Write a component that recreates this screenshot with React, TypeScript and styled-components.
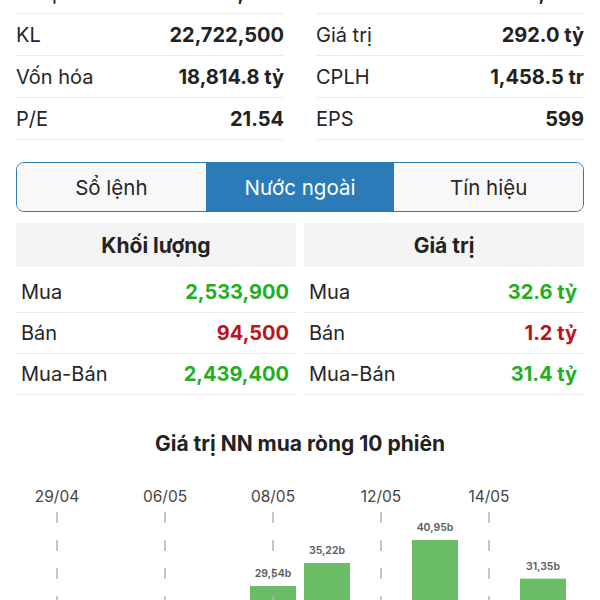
import React from "react";
import styled, { createGlobalStyle } from "styled-components";

const GlobalStyle = createGlobalStyle`
  html, body {
    margin: 0;
    padding: 0;
    overflow: hidden;
    background: #ffffff;
  }
  body {
    font-family: Inter, "Noto Sans", "Liberation Sans", sans-serif;
    color: #222222;
  }
`;

const Page = styled.div`
  margin-top: -28px;
  padding: 0 16px;
  display: flex;
  flex-direction: column;
`;

const StatsGrid = styled.div`
  display: grid;
  grid-template-columns: 1fr 1fr;
  column-gap: 32px;
`;

const StatRow = styled.div`
  height: 41px;
  border-bottom: 1px solid #ebebeb;
  display: flex;
  align-items: center;
  justify-content: space-between;
  font-size: 20px;
`;

const StatLabel = styled.span`
  font-weight: 400;
  color: #262626;
`;

const StatValue = styled.span`
  font-weight: 700;
  color: #222222;
`;

const Segmented = styled.div`
  margin-top: 22px;
  height: 50px;
  box-sizing: border-box;
  border: 1.5px solid #2d7bb6;
  border-radius: 8px;
  overflow: hidden;
  display: grid;
  grid-template-columns: 1fr 1fr 1fr;
`;

const Segment = styled.div<{ $active?: boolean }>`
  display: flex;
  align-items: center;
  justify-content: center;
  font-size: 20.5px;
  background: ${(p) => (p.$active ? "#2b7bb8" : "#f8f8f8")};
  color: ${(p) => (p.$active ? "#ffffff" : "#262626")};
`;

const Tables = styled.div`
  margin-top: 11px;
  display: grid;
  grid-template-columns: 1fr 1fr;
  column-gap: 8px;
`;

const Table = styled.div`
  display: flex;
  flex-direction: column;
`;

const TableHead = styled.div`
  height: 44px;
  margin-bottom: 5px;
  background: #f4f4f4;
  display: flex;
  align-items: center;
  justify-content: center;
  font-size: 21px;
  font-weight: 700;
  color: #222222;
`;

const TableRow = styled.div`
  height: 40px;
  border-bottom: 1px solid #ececec;
  padding: 0 7px 0 5px;
  display: flex;
  align-items: center;
  justify-content: space-between;
  font-size: 20px;
`;

const TableValue = styled.span<{ $tone: "up" | "down" }>`
  font-weight: 700;
  color: ${(p) => (p.$tone === "up" ? "#1fae24" : "#c2111c")};
`;

const ChartTitle = styled.div`
  margin-top: 36px;
  height: 26px;
  line-height: 26px;
  text-align: center;
  font-size: 21px;
  font-weight: 700;
  color: #222222;
`;

const ChartWrap = styled.div`
  margin: 13px -16px 0;
  height: 250px;
`;

const stats: [string, string, string, string][] = [
  ["Thấp", "18,000", "Cao", "18,250"],
  ["KL", "22,722,500", "Giá trị", "292.0 tỷ"],
  ["Vốn hóa", "18,814.8 tỷ", "CPLH", "1,458.5 tr"],
  ["P/E", "21.54", "EPS", "599"],
];

const volume = [
  { label: "Mua", value: "2,533,900", tone: "up" as const },
  { label: "Bán", value: "94,500", tone: "down" as const },
  { label: "Mua-Bán", value: "2,439,400", tone: "up" as const },
];

const valueRows = [
  { label: "Mua", value: "32.6 tỷ", tone: "up" as const },
  { label: "Bán", value: "1.2 tỷ", tone: "down" as const },
  { label: "Mua-Bán", value: "31.4 tỷ", tone: "up" as const },
];

const sessions = [
  { date: "29/04", v: 12.4 },
  { date: "05/05", v: 8.6 },
  { date: "06/05", v: 15.1 },
  { date: "07/05", v: 18.3 },
  { date: "08/05", v: 29.54 },
  { date: "09/05", v: 35.22 },
  { date: "12/05", v: 20.17 },
  { date: "13/05", v: 40.95 },
  { date: "14/05", v: 19.8 },
  { date: "15/05", v: 31.35 },
];

const chartFont = "Inter, 'Noto Sans', sans-serif";

function Chart() {
  const top = 470;
  const baseline = 705 - top;
  const scale = 4.03;
  const slot = 54;
  const first = 57;
  return (
    <svg width={600} height={250} viewBox="0 0 600 250">
      {sessions.map((s, i) => {
        const cx = first + slot * i;
        const h = s.v * scale;
        return (
          <rect
            key={"b" + s.date}
            x={cx - 23}
            y={baseline - h}
            width={46}
            height={h}
            fill="#6abd66"
          />
        );
      })}
      {sessions.map((s, i) => {
        if (i % 2 !== 0) return null;
        const cx = first + slot * i;
        return (
          <g key={"d" + s.date}>
            <text
              x={cx}
              y={496 - top + 5.5}
              textAnchor="middle"
              fontSize={15.5}
              fill="#444444"
              fontFamily={chartFont}
            >
              {s.date}
            </text>
            <line
              x1={cx}
              x2={cx}
              y1={512 - top}
              y2={250}
              stroke="#b4b4b4"
              strokeWidth={1.5}
              strokeDasharray="11 17"
            />
          </g>
        );
      })}
      {sessions.map((s, i) => {
        const cx = first + slot * i;
        const h = s.v * scale;
        return (
          <text
            key={"v" + s.date}
            x={cx}
            y={baseline - h - 9}
            textAnchor="middle"
            fontSize={10.5}
            fontWeight={600}
            fill="#5a5a5a"
            fontFamily={chartFont}
          >
            {s.v.toFixed(2).replace(".", ",") + "b"}
          </text>
        );
      })}
    </svg>
  );
}

export default function App() {
  return (
    <>
      <GlobalStyle />
      <Page>
        <StatsGrid>
          {stats.map(([l1, v1, l2, v2]) => (
            <React.Fragment key={l1}>
              <StatRow>
                <StatLabel>{l1}</StatLabel>
                <StatValue>{v1}</StatValue>
              </StatRow>
              <StatRow>
                <StatLabel>{l2}</StatLabel>
                <StatValue>{v2}</StatValue>
              </StatRow>
            </React.Fragment>
          ))}
        </StatsGrid>

        <Segmented>
          <Segment>Sổ lệnh</Segment>
          <Segment $active>Nước ngoài</Segment>
          <Segment>Tín hiệu</Segment>
        </Segmented>

        <Tables>
          <Table>
            <TableHead>Khối lượng</TableHead>
            {volume.map((r) => (
              <TableRow key={r.label}>
                <StatLabel>{r.label}</StatLabel>
                <TableValue $tone={r.tone}>{r.value}</TableValue>
              </TableRow>
            ))}
          </Table>
          <Table>
            <TableHead>Giá trị</TableHead>
            {valueRows.map((r) => (
              <TableRow key={r.label}>
                <StatLabel>{r.label}</StatLabel>
                <TableValue $tone={r.tone}>{r.value}</TableValue>
              </TableRow>
            ))}
          </Table>
        </Tables>

        <ChartTitle>Giá trị NN mua ròng 10 phiên</ChartTitle>
        <ChartWrap>
          <Chart />
        </ChartWrap>
      </Page>
    </>
  );
}
